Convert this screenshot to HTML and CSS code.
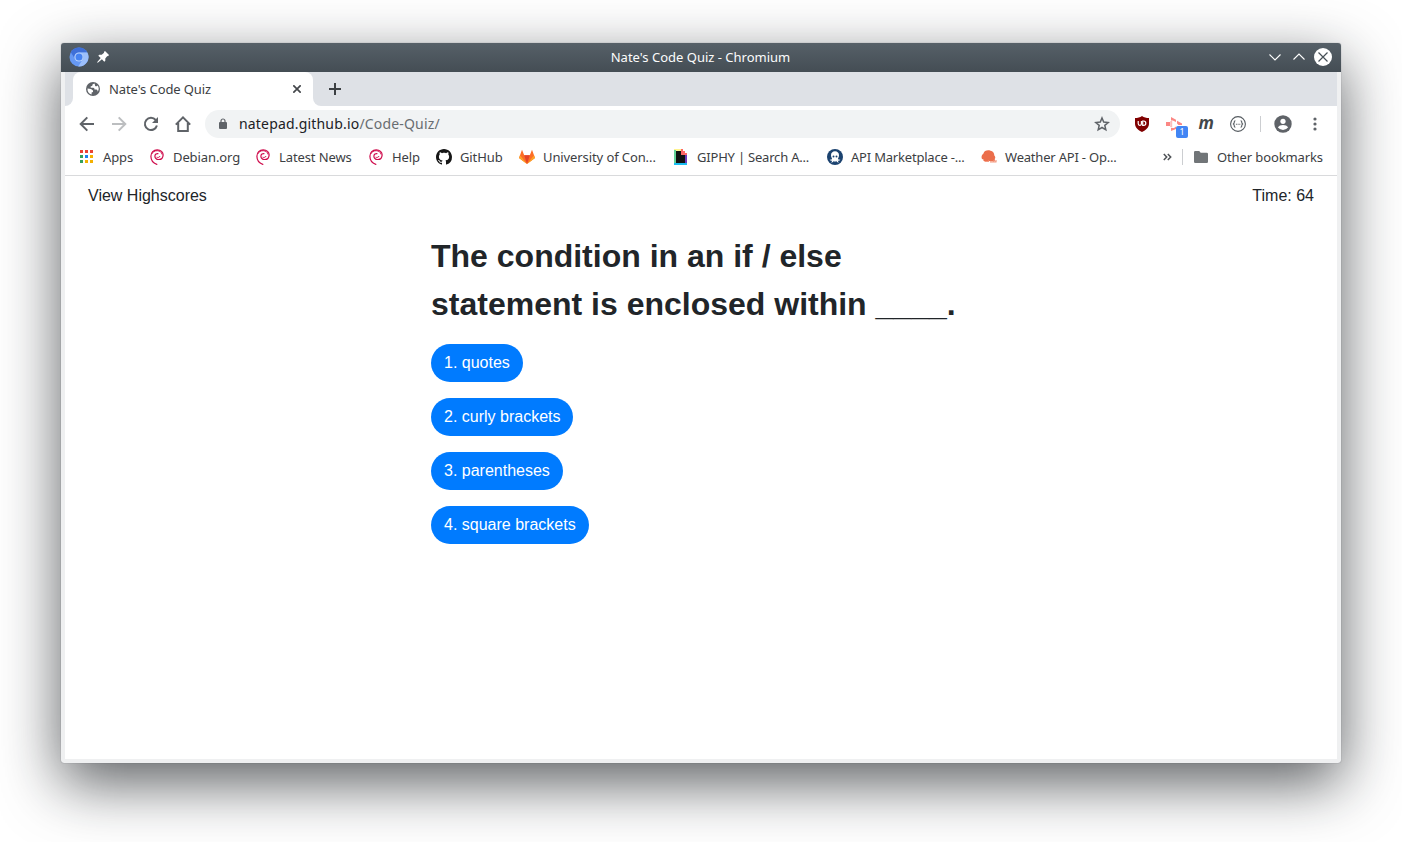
FILE: index.html
```
<!DOCTYPE html>
<html lang="en">
<head>
<meta charset="utf-8">
<title>Nate's Code Quiz</title>
<link rel="stylesheet" href="styles.css">
</head>
<body>
<svg class="defs" width="0" height="0">
  <symbol id="debian" viewBox="0 0 16 16">
    <path d="M8.300 15.600C4.500 14.300 1.900 11 1.900 7.200C1.900 3.400 4.500 .8 8.200 .8C11.800 .8 14.300 3.100 14.100 6.100C13.900 8.900 12 10.600 9.700 10.500C7.300 10.400 5.800 8.900 5.900 7.100C6 5.400 7.400 4.300 9.400 4.600" fill="none" stroke="#cf0c4c" stroke-width="1.200"/>
    <path d="M3 4.800C3.800 2.700 5.700 1.700 8.200 1.700C10.700 1.700 12.800 3.200 13.100 5.500M7.600 8.200C8.700 8.700 10.600 8.500 11 7" fill="none" stroke="#cf0c4c" stroke-width="1"/>
  </symbol>
</svg>
<div class="window">
  <header class="titlebar">
    <div class="title-left">
      <svg width="20" height="20" viewBox="0 0 20 20"><circle cx="10" cy="10" r="9.500" fill="#6698f3"/><path d="M1.800 5.200A9.500 9.500 0 0 1 18.300 5.600L10 5.600A4.500 4.500 0 0 0 5.900 11.800Z" fill="#3f6fd8"/><path d="M10 5.600H18.400A9.500 9.500 0 0 1 9.200 19.500L13.900 12.200A4.500 4.500 0 0 0 10 5.600Z" fill="#9cbffb"/><circle cx="10" cy="10" r="4.600" fill="#b9d2fc"/><circle cx="10" cy="10" r="3.500" fill="#4682f1"/></svg>
      <svg class="pin" width="12" height="12" viewBox="0 0 12 12"><path d="M8 0L12 4L11 5.200L10.300 5L8.300 7.400V9.700L7.300 10.700L4.900 8.300L.8 11.800L.1 11.200L3.700 7.100L1.300 4.700L2.300 3.700L4.700 3.800L7.100 1.800L6.900 1Z" fill="#fff"/></svg>
    </div>
    <div class="title-text">Nate's Code Quiz - Chromium</div>
    <div class="title-right">
      <svg width="12" height="18" viewBox="0 0 12 18"><path d="M.5 6.500L6 12L11.500 6.500" fill="none" stroke="#fff" stroke-width="1.100"/></svg>
      <svg width="12" height="18" viewBox="0 0 12 18"><path d="M.5 11.500L6 6L11.500 11.500" fill="none" stroke="#fff" stroke-width="1.100"/></svg>
      <svg width="18" height="18" viewBox="0 0 18 18"><circle cx="9" cy="9" r="9" fill="#fff"/><path d="M4.500 4.500L13.500 13.500M13.500 4.500L4.500 13.500" stroke="#475057" stroke-width="1.200"/></svg>
    </div>
  </header>
  <div class="browser">
    <div class="tabstrip">
      <div class="tab-lead"></div>
      <div class="tab">
        <svg width="14" height="14" viewBox="0 0 14 14"><circle cx="7" cy="7" r="7" fill="#5f6368"/><path d="M8.400 1.600C6.500 2 6.200 2.900 6.300 3.900L4.700 4.300V5.800H7.300C8.300 5.900 8.400 6.600 8.500 7.600H10.400C11.200 7.600 11.500 8.400 11.700 9.700C13.300 7.500 12.900 4.900 11.500 3.400C10.900 4.100 10.100 4.500 9.500 4.300C8.600 3.900 9.300 2.700 8.400 1.600ZM1.500 6.500L5 6.900L7 8.500V9.900L5.600 10.400V12.500C3 12 1.200 9.900 1.500 6.500Z" fill="#fff"/></svg>
        <span class="tab-label">Nate's Code Quiz</span>
        <svg width="8" height="8" viewBox="0 0 8 8"><path d="M.3 .3L7.700 7.700M7.700 .3L.3 7.700" stroke="#44474b" stroke-width="1.700"/></svg>
      </div>
      <div class="tab-rest"><svg width="12" height="12" viewBox="0 0 12 12"><path d="M6 0V12M0 6H12" stroke="#3c4043" stroke-width="2"/></svg></div>
    </div>
    <div class="toolbar">
      <div class="nav">
        <svg width="16" height="16" viewBox="0 0 16 16"><path d="M15 8H2M8.300 1.400L1.700 8L8.300 14.600" fill="none" stroke="#5f6368" stroke-width="2"/></svg>
        <svg width="16" height="16" viewBox="0 0 16 16"><path d="M1 8H14M7.700 1.400L14.300 8L7.700 14.600" fill="none" stroke="#bcbec0" stroke-width="2"/></svg>
        <svg width="16" height="16" viewBox="0 0 16 16"><path d="M13.900 9.500A6.100 6.100 0 1 1 12.700 4" fill="none" stroke="#5f6368" stroke-width="2"/><path d="M15 1V7H9Z" fill="#5f6368"/></svg>
        <svg width="16" height="16" viewBox="0 0 16 16"><path d="M.8 8.600L8 1.400L15.200 8.600M3.200 7V15H12.800V7" fill="none" stroke="#5f6368" stroke-width="2"/></svg>
      </div>
      <div class="address">
        <svg class="lock" width="8" height="11" viewBox="0 0 8 11"><path d="M2 5V3A2 2 0 0 1 6 3V5" fill="none" stroke="#5f6368" stroke-width="1.200"/><rect y="4" width="8" height="7" rx="1" fill="#5f6368"/></svg>
        <span class="url">natepad.github.io<span class="path">/Code-Quiz/</span></span>
        <svg width="16" height="16" viewBox="0 0 16 16"><path d="M8 2L9.700 6.100L14.200 6.500L10.800 9.400L11.800 13.800L8 11.500L4.200 13.800L5.200 9.400L1.800 6.500L6.300 6.100Z" fill="none" stroke="#5f6368" stroke-width="1.500"/></svg>
      </div>
      <div class="extensions">
        <svg width="16" height="16" viewBox="0 0 16 16"><path d="M8 0C10 1.400 12.400 2 15 2V7.500C15 11.500 12 14.200 8 16C4 14.200 1 11.500 1 7.500V2C3.600 2 6 1.400 8 0Z" fill="#800000"/><path d="M4.200 5V7.500Q4.200 9.300 5.800 9.300T7.400 7.500V5M8.700 5V9.300H9.700Q11.800 9.300 11.800 7.200T9.700 5Z" fill="none" stroke="#fff" stroke-width="1.200"/></svg>
        <div class="ext-badged">
          <svg width="16" height="16" viewBox="0 0 16 16"><path d="M0 6H4V10H0Z" fill="#fb8784"/><path d="M4.200 5.200L6.200 4.800V11.500L4.200 11Z" fill="#fdbcba"/><path d="M5 1L10 3.800V6L6.800 4.400H5ZM11 4.700L16 7.500V9H12.500L11 7.500ZM5 12H8L10 10.500V13L5 15Z" fill="#fb8784"/></svg>
          <span class="badge">1</span>
        </div>
        <span class="ext-m">m</span>
        <svg width="16" height="16" viewBox="0 0 16 16"><g fill="none" stroke="#555b60" stroke-width="1.100"><circle cx="8" cy="8" r="7.400"/><path d="M5.400 4.800Q4.200 4.800 4.200 6V7L3.300 8L4.200 9V10Q4.200 11.200 5.400 11.200M10.600 4.800Q11.800 4.800 11.800 6V7L12.700 8L11.800 9V10Q11.800 11.200 10.600 11.200"/><path d="M5.900 8.300H10.300" stroke-dasharray="1 .7"/></g></svg>
      </div>
      <div class="divider"></div>
      <svg class="avatar" width="18" height="18" viewBox="0 0 18 18"><circle cx="9" cy="9" r="8.700" fill="#5f6368"/><circle cx="9" cy="6.300" r="2.600" fill="#fff"/><path d="M3.800 12.300Q5.500 10 9 10T14.200 12.300Q12.200 15 9 15T3.800 12.300Z" fill="#fff"/></svg>
      <svg class="menu" width="4" height="14" viewBox="0 0 4 14"><g fill="#5f6368"><circle cx="2" cy="2" r="1.600"/><circle cx="2" cy="7" r="1.600"/><circle cx="2" cy="12" r="1.600"/></g></svg>
    </div>
    <div class="bookmarks">
      <div class="bm apps"><svg width="16" height="16" viewBox="0 0 16 16"><path d="M1 1h3v3h-3zM6 1h3v3h-3zM11 1h3v3h-3z" fill="#ea4335"/><path d="M1 6h3v3h-3zM1 11h3v3h-3z" fill="#34a05a"/><path d="M6 6h3v3h-3z" fill="#1a82f0"/><path d="M11 6h3v3h-3zM6 11h3v3h-3zM11 11h3v3h-3z" fill="#f4b000"/></svg>Apps</div>
      <div class="bm debian"><svg width="16" height="16"><use href="#debian"/></svg>Debian.org</div>
      <div class="bm news"><svg width="16" height="16"><use href="#debian"/></svg>Latest News</div>
      <div class="bm help"><svg width="16" height="16"><use href="#debian"/></svg>Help</div>
      <div class="bm github"><svg width="16" height="16" viewBox="0 0 16 16"><path fill="#161616" d="M8 0C3.580 0 0 3.580 0 8c0 3.540 2.290 6.530 5.470 7.590.4.070.55-.17.55-.38 0-.19-.01-.82-.01-1.490-2.010.37-2.530-.49-2.690-.94-.09-.23-.48-.94-.82-1.130-.28-.15-.68-.52-.01-.53.63-.01 1.080.58 1.230.82.72 1.210 1.870.87 2.330.66.07-.52.28-.87.51-1.070-1.780-.2-3.640-.89-3.640-3.950 0-.87.31-1.590.82-2.150-.08-.2-.36-1.020.08-2.120 0 0 .67-.21 2.200.82.64-.18 1.320-.27 2-.27s1.360.09 2 .27c1.530-1.040 2.200-.82 2.200-.82.44 1.100.16 1.920.08 2.120.51.56.82 1.270.82 2.150 0 3.070-1.870 3.750-3.650 3.950.29.25.54.73.54 1.480 0 1.070-.01 1.930-.01 2.200 0 .21.15.46.55.38A8.010 8.010 0 0 0 16 8c0-4.420-3.580-8-8-8z"/></svg>GitHub</div>
      <div class="bm wide"><svg width="16" height="16" viewBox="0 0 16 16"><path d="M8 15L0 9L3 .8L5.200 6.200H10.800L13 .8L16 9Z" fill="#fc6d26"/><path d="M5.200 6.200H10.800L8 15Z" fill="#e24329"/><path d="M0 9L1 6.200L8 15ZM16 9L15 6.200L8 15Z" fill="#fca326"/></svg>University of Con...</div>
      <div class="bm wide tight"><svg width="16" height="16" viewBox="0 0 16 16"><path d="M1 0H8V2H1Z" fill="#fff38e"/><path d="M1 1H3V14H1Z" fill="#63d297"/><path d="M1 14H14V16H1Z" fill="#18bdf2"/><path d="M12 5H14V14H12Z" fill="#6c3aba"/><path d="M3 2H8V6H12V14H3Z" fill="#111"/><path d="M8 0H10V2H12V4H14V6H8Z" fill="#ff6666"/></svg>GIPHY | Search A...</div>
      <div class="bm wide tight"><svg width="16" height="16" viewBox="0 0 16 16"><circle cx="8" cy="8" r="8" fill="#1b426f"/><path d="M8 2.300C5.500 2.300 4 4 4 6.200C4 8 5 9 5 10Q4 11.300 2.700 10.300Q3.500 12.500 5.200 11.500Q5 13 4 13.300Q6 13.800 7 11.700L8 13.300L9 11.700Q10 13.800 12 13.300Q11 13 10.800 11.500Q12.500 12.500 13.300 10.300Q12 11.300 11 10C11 9 12 8 12 6.200C12 4 10.500 2.300 8 2.300Z" fill="#fff"/><circle cx="6.500" cy="7.500" r="1" fill="#1b426f"/><circle cx="9.500" cy="7.500" r="1" fill="#1b426f"/></svg>API Marketplace -...</div>
      <div class="bm wide tight"><svg width="16" height="16" viewBox="0 0 16 16"><path d="M1 10C-.1 7.500 1 5.500 2.500 4.500C3 1.500 7 .5 9.500 1.700C12 2 13.500 4.500 13.300 6.500C14.500 7.500 14.500 9 13.800 9.800V12H2.500V10.500Z" fill="#eb6e4b"/><path d="M3.500 12.500H7.500V11.500M9 12.800H15.500M12.500 11.500V13.500M15 11V13" fill="none" stroke="#f49a80" stroke-width="1.200"/></svg>Weather API - Op...</div>
      <div class="other">
        <svg width="9" height="8" viewBox="0 0 9 8"><path d="M.8 1L3.700 4L.8 7M4.800 1L7.700 4L4.800 7" fill="none" stroke="#4e5256" stroke-width="1.500"/></svg>
        <div class="divider"></div>
        <svg class="folder" width="14" height="12" viewBox="0 0 14 12"><path d="M1.200 0H5.200L6.700 1.700H12.800Q14 1.700 14 3V10.800Q14 12 12.800 12H1.200Q0 12 0 10.800V1.200Q0 0 1.200 0Z" fill="#717578"/></svg>
        <span>Other bookmarks</span>
      </div>
    </div>
    <main class="page">
      <div class="status"><span>View Highscores</span><span>Time: 64</span></div>
      <section class="quiz">
        <h1>The condition in an if / else statement is enclosed within ____.</h1>
        <button>1. quotes</button>
        <button>2. curly brackets</button>
        <button>3. parentheses</button>
        <button>4. square brackets</button>
      </section>
    </main>
  </div>
</div>
</body>
</html>
```
FILE: styles.css
```
* { box-sizing: border-box; }
body { margin: 0; height: 842px; padding: 43px 61px 0; background: #fff; overflow: hidden; font-family: "Noto Sans", sans-serif; }
svg { display: block; flex: none; }
.defs { position: absolute; }
.window { width: 1280px; height: 720px; border-radius: 3px; background: #eff0f1; display: flex; flex-direction: column; box-shadow: 0 0 1px rgba(40,45,50,.6), 0 20px 60px rgba(18,22,26,.69); }
.titlebar { height: 29px; flex: none; display: grid; grid-template-columns: 1fr auto 1fr; align-items: center; padding: 0 9px 1px 8px; border-radius: 3px 3px 0 0; background: linear-gradient(#566068, #444d54); color: #fcfcfc; font-size: 13px; }
.title-left { display: flex; align-items: center; gap: 8px; }
.title-right { display: flex; justify-content: flex-end; align-items: center; gap: 12px; }
.title-right svg:last-child { margin-left: -3px; }
.browser { flex: 1; margin: 0 4px 4px; display: flex; flex-direction: column; background: #fff; }
.tabstrip { height: 34px; display: flex; flex: none; background: linear-gradient(#dee1e6 0 12px, #fff 12px); }
.tab-lead { width: 8px; background: #dee1e6; border-bottom-right-radius: 8px; }
.tab { width: 240px; display: flex; align-items: center; padding: 0 12px 0 13px; color: #3c4043; font-size: 13px; letter-spacing: -.1px; border-radius: 8px 8px 0 0; background: #fff; }
.tab-label { margin-left: 9px; flex: 1; }
.tab-rest { flex: 1; background: #dee1e6; border-bottom-left-radius: 8px; padding: 11px 16px; }
.toolbar { height: 36px; flex: none; display: flex; align-items: center; padding-left: 14px; }
.nav { display: flex; gap: 16px; width: 126px; }
.address { width: 915px; height: 28px; border-radius: 14px; background: #f1f3f4; display: flex; align-items: center; padding: 0 10px 0 14px; color: #202124; font-size: 14px; }
.lock { margin-bottom: 1px; }
.url { flex: 1; margin-left: 12px; padding-bottom: 2px; letter-spacing: .18px; }
.path { color: #696d71; }
.extensions { display: flex; align-items: center; gap: 16px; margin-left: 14px; }
.ext-badged { position: relative; width: 16px; height: 16px; }
.badge { position: absolute; left: 10px; top: 10px; width: 12px; height: 12px; line-height: 12px; font-size: 9px; text-align: center; color: #fff; background: #4285f4; border-radius: 2px; }
.ext-m { width: 16px; text-align: center; font-family: "Open Sans", sans-serif; font-size: 17px; line-height: 16px; padding-bottom: 2px; font-weight: 700; font-style: italic; letter-spacing: -.5px; color: #42474a; }
.divider { width: 1px; height: 16px; background: #ccced1; margin-left: 14px; }
.avatar { margin-left: 13px; }
.menu { margin-left: 21px; }
.bookmarks { height: 34px; flex: none; display: flex; align-items: center; padding: 0 14px 3px; border-bottom: 1px solid #d9dadc; color: #3c4043; font-size: 13px; letter-spacing: -.1px; white-space: nowrap; }
.bm { display: flex; align-items: center; gap: 8px; flex: none; }
.apps { width: 70px; }
.debian { width: 106px; }
.news { width: 113px; }
.help { width: 68px; }
.github { width: 83px; }
.wide { width: 154px; }
.tight { letter-spacing: -.2px; }
.other { margin-left: auto; display: flex; align-items: center; }
.other .divider { margin-left: 10px; }
.folder { margin: 0 9px 0 11px; }
.page { flex: 1; font-family: "Liberation Sans", Arial, sans-serif; font-size: 16px; line-height: 24px; color: #212529; }
.status { display: flex; justify-content: space-between; padding: 8px 23px 0; }
.quiz { width: 540px; margin: 24px 0 0 366px; display: flex; flex-direction: column; align-items: flex-start; gap: 16px; }
h1 { margin: 0; font-size: 32px; line-height: 48px; font-weight: bold; }
button { height: 38px; padding: 6px 13px; border: 0; border-radius: 19px; background: #007bff; color: #fff; font: inherit; }
```
